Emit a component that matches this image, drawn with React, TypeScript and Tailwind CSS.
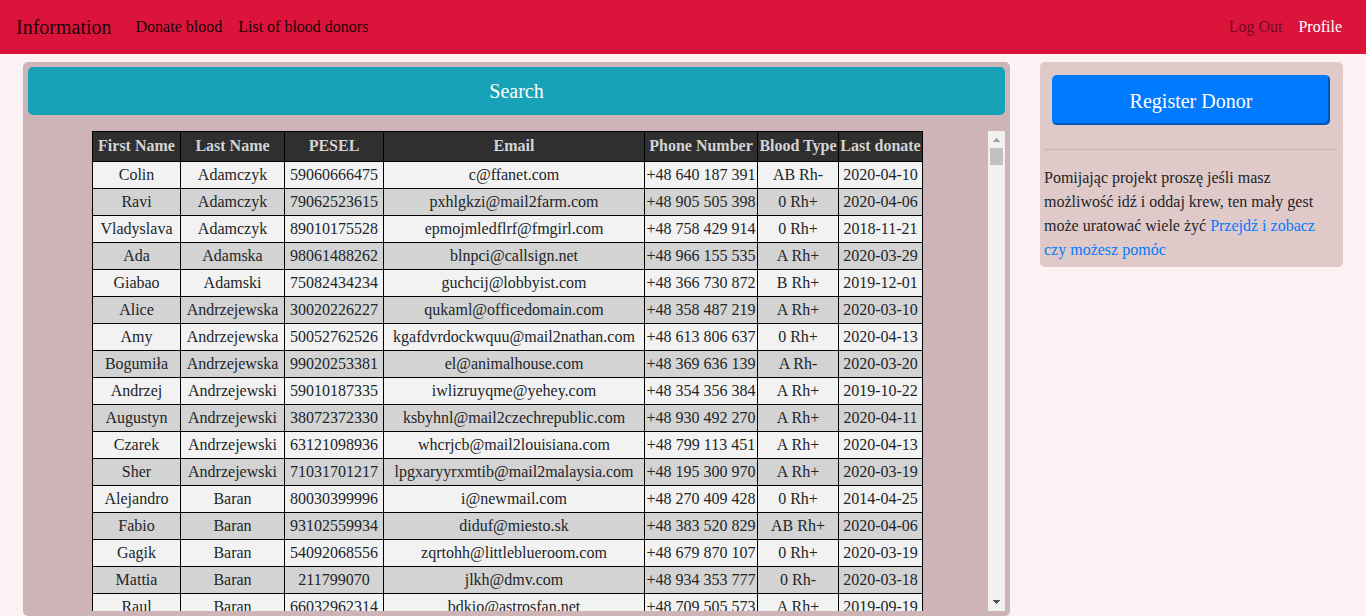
import React from "react";

type Donor = [string, string, string, string, string, string, string];

const columns = [
  { label: "First Name", width: "w-[88px]" },
  { label: "Last Name", width: "w-[104px]" },
  { label: "PESEL", width: "w-[99px]" },
  { label: "Email", width: "w-[261px]" },
  { label: "Phone Number", width: "w-[113px]" },
  { label: "Blood Type", width: "w-[81px]" },
  { label: "Last donate", width: "w-[84px]" },
];

const donors: Donor[] = [
  ["Colin", "Adamczyk", "59060666475", "c@ffanet.com", "+48 640 187 391", "AB Rh-", "2020-04-10"],
  ["Ravi", "Adamczyk", "79062523615", "pxhlgkzi@mail2farm.com", "+48 905 505 398", "0 Rh+", "2020-04-06"],
  ["Vladyslava", "Adamczyk", "89010175528", "epmojmledflrf@fmgirl.com", "+48 758 429 914", "0 Rh+", "2018-11-21"],
  ["Ada", "Adamska", "98061488262", "blnpci@callsign.net", "+48 966 155 535", "A Rh+", "2020-03-29"],
  ["Giabao", "Adamski", "75082434234", "guchcij@lobbyist.com", "+48 366 730 872", "B Rh+", "2019-12-01"],
  ["Alice", "Andrzejewska", "30020226227", "qukaml@officedomain.com", "+48 358 487 219", "A Rh+", "2020-03-10"],
  ["Amy", "Andrzejewska", "50052762526", "kgafdvrdockwquu@mail2nathan.com", "+48 613 806 637", "0 Rh+", "2020-04-13"],
  ["Bogumiła", "Andrzejewska", "99020253381", "el@animalhouse.com", "+48 369 636 139", "A Rh-", "2020-03-20"],
  ["Andrzej", "Andrzejewski", "59010187335", "iwlizruyqme@yehey.com", "+48 354 356 384", "A Rh+", "2019-10-22"],
  ["Augustyn", "Andrzejewski", "38072372330", "ksbyhnl@mail2czechrepublic.com", "+48 930 492 270", "A Rh+", "2020-04-11"],
  ["Czarek", "Andrzejewski", "63121098936", "whcrjcb@mail2louisiana.com", "+48 799 113 451", "A Rh+", "2020-04-13"],
  ["Sher", "Andrzejewski", "71031701217", "lpgxaryyrxmtib@mail2malaysia.com", "+48 195 300 970", "A Rh+", "2020-03-19"],
  ["Alejandro", "Baran", "80030399996", "i@newmail.com", "+48 270 409 428", "0 Rh+", "2014-04-25"],
  ["Fabio", "Baran", "93102559934", "diduf@miesto.sk", "+48 383 520 829", "AB Rh+", "2020-04-06"],
  ["Gagik", "Baran", "54092068556", "zqrtohh@littleblueroom.com", "+48 679 870 107", "0 Rh+", "2020-03-19"],
  ["Mattia", "Baran", "211799070", "jlkh@dmv.com", "+48 934 353 777", "0 Rh-", "2020-03-18"],
  ["Raul", "Baran", "66032962314", "bdkio@astrosfan.net", "+48 709 505 573", "A Rh+", "2019-09-19"],
];

function Navbar() {
  return (
    <nav className="flex items-center justify-between bg-[#dc143c] px-4 py-[11px]">
      <div className="flex items-center">
        <a href="#information" className="mr-6 text-xl leading-8 text-black/90">
          Information
        </a>
        <div className="flex gap-4 leading-6 text-black/90">
          <a href="#donate">Donate blood</a>
          <a href="#donors">List of blood donors</a>
        </div>
      </div>
      <div className="flex gap-4 pr-2 leading-6">
        <a href="#logout" className="text-black/50">Log Out</a>
        <a href="#profile" className="text-white">Profile</a>
      </div>
    </nav>
  );
}

function DonorTable() {
  return (
    <table className="mx-auto w-[831px] table-fixed border-collapse text-center leading-6">
      <colgroup>
        {columns.map((c) => (
          <col key={c.label} className={c.width} />
        ))}
      </colgroup>
      <thead>
        <tr className="bg-[#2f2f2f] text-[#d3d3d3]">
          {columns.map((c) => (
            <th key={c.label} scope="col" className="h-[30px] border border-black px-0 pt-0 pb-0.5 font-bold whitespace-nowrap">
              {c.label}
            </th>
          ))}
        </tr>
      </thead>
      <tbody>
        {donors.map((donor) => (
          <tr key={donor[2]} className="odd:bg-[#f2f2f2] even:bg-[#d3d3d3]">
            {donor.map((value, i) => (
              <td key={columns[i].label} className="border border-black px-0 py-px whitespace-nowrap">
                {value}
              </td>
            ))}
          </tr>
        ))}
      </tbody>
    </table>
  );
}

function ScrollTrack() {
  return (
    <div aria-hidden="true" className="flex w-[17px] shrink-0 flex-col items-center bg-[#f1f1f1]">
      <svg width="17" height="17" viewBox="0 0 17 17" shapeRendering="crispEdges" fill="#a3a3a3">
        <path d="M8 7h1v1h1v1h1v1h1v1H5v-1h1V9h1V8h1z" />
      </svg>
      <div className="h-[17px] w-[13px] bg-[#c1c1c1]" />
      <svg className="mt-auto" width="17" height="17" viewBox="0 0 17 17" shapeRendering="crispEdges" fill="#505050">
        <path d="M5 6h7v1h-1v1h-1v1H9v1H8V9H7V8H6V7H5z" />
      </svg>
    </div>
  );
}

export default function App() {
  return (
    <div className="min-h-screen bg-[#fcf1f3] font-['Liberation_Serif',serif] text-base text-[#212529]">
      <Navbar />
      <div className="grid grid-cols-[987fr_303fr] items-start gap-[30px] px-[23px] pt-2">
        <main className="min-w-0 rounded-[5px] bg-[#cfb4b7] p-[5px]">
          <button type="button" className="block h-12 w-full rounded-[5px] bg-[#17a2b8] text-xl text-white">
            Search
          </button>
          <div className="mt-4 flex h-[480px]">
            <div className="min-w-0 flex-1 overflow-y-auto pr-px [scrollbar-width:none]">
              <DonorTable />
            </div>
            <ScrollTrack />
          </div>
        </main>
        <aside className="rounded-[5px] bg-[#e0c9c9] pt-[13px] pr-[5px] pb-[5px] pl-1">
          <div className="px-2">
            <button
              type="button"
              className="block h-[50px] w-full rounded-[5px] bg-[#007bff] pt-0.5 text-xl text-white shadow-[inset_-2px_-2px_0_#0056b3]"
            >
              Register Donor
            </button>
          </div>
          <hr className="mt-6 mb-4 border-t border-black/10" />
          <p className="leading-6">
            Pomijając projekt proszę jeśli masz możliwość idź i oddaj krew, ten mały gest może uratować wiele żyć{" "}
            <a href="#help" className="text-[#007bff]">
              Przejdź i zobacz czy możesz pomóc
            </a>
          </p>
        </aside>
      </div>
    </div>
  );
}
